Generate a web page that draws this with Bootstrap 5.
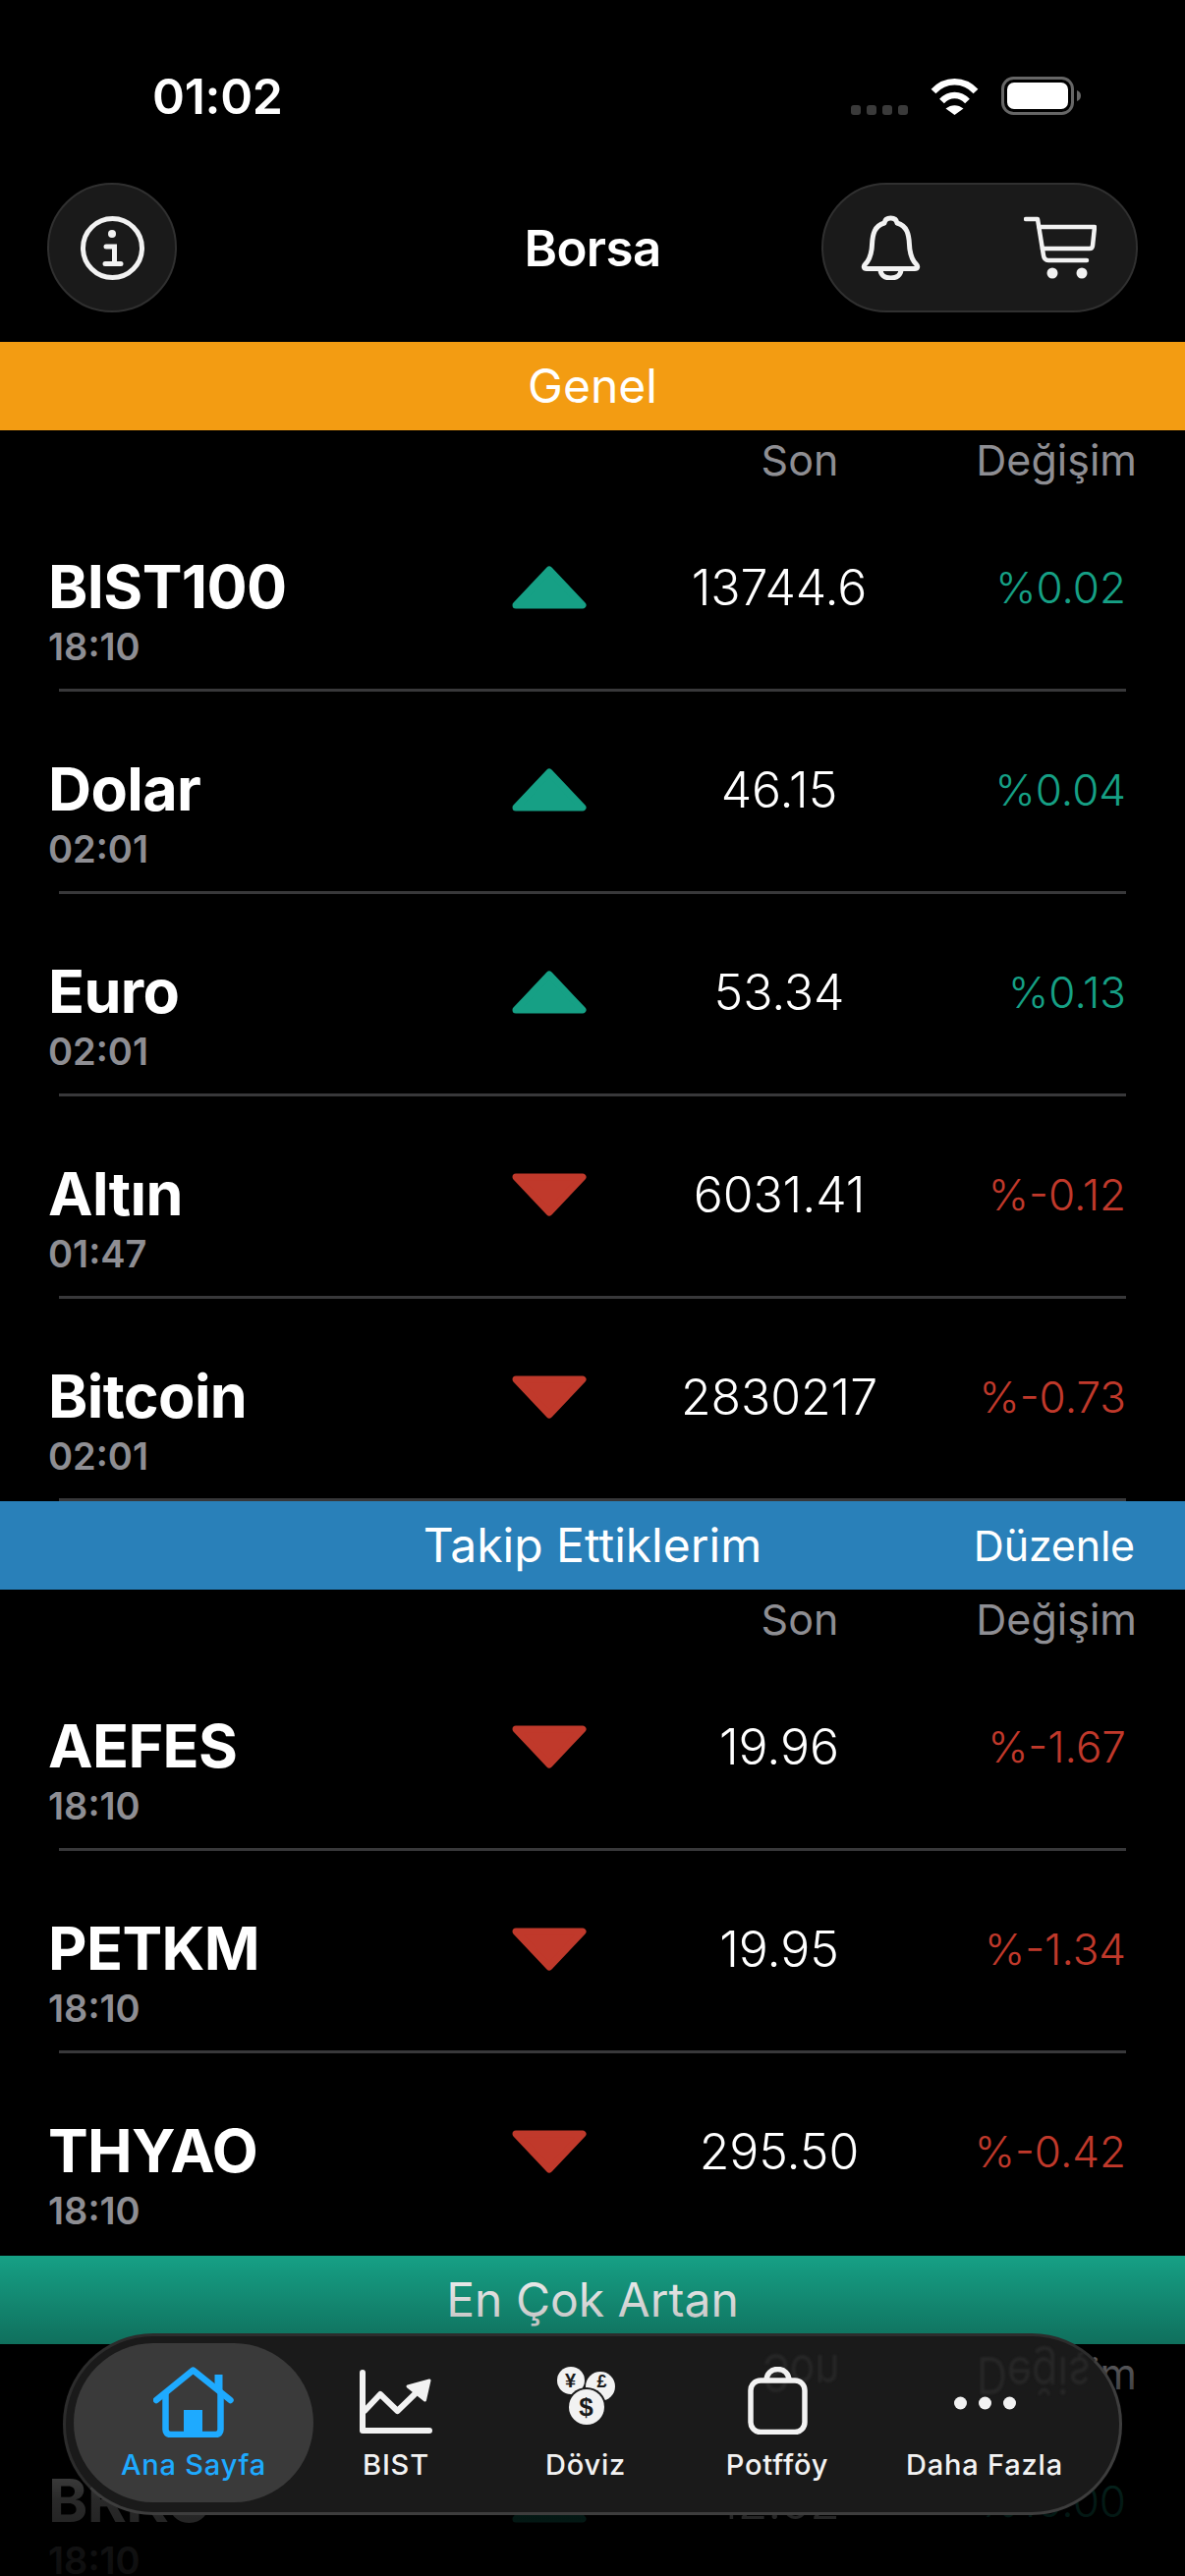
<!DOCTYPE html>
<html lang="tr">
<head>
<meta charset="utf-8">
<title>Borsa</title>
<link href="https://cdn.jsdelivr.net/npm/bootstrap@5.3.0/dist/css/bootstrap.min.css" rel="stylesheet">
<style>
html,body{height:100%;overflow:hidden;background:#000;}
body{font-family:Inter,"Liberation Sans",sans-serif;color:#fff;}
.screen{width:1206px;height:2622px;overflow:hidden;background:#000;}
.statusbar{height:186px;padding:78px 106px 0 155px;}
.clock{font-size:50px;font-weight:600;line-height:40px;letter-spacing:-.3px;}
.sysicons{gap:23px;height:39px;}
.sigdots{gap:6px;}
.sigdots span{width:10px;height:10px;border-radius:3px;background:#3a3a3a;display:block;}
.topbar{height:132px;margin:0 48px 30px;display:grid;grid-template-columns:1fr auto 1fr;align-items:center;}
.glassbtn{background:#1a1a1a;border:2px solid #303030;height:132px;}
.infobtn{width:132px;}
.actionpill{width:322px;padding:0 40px 0 38px;justify-self:end;}
.pagetitle{font-size:51px;font-weight:600;letter-spacing:-.6px;line-height:1;}
.band{height:90px;font-size:48px;line-height:1;}
.band-orange{background:#f39c12;}
.band-blue{background:#2980b9;display:grid;grid-template-columns:1fr auto 1fr;padding:0 51px;}
.band-green{background:#16a085;}
.editlink{font-size:43px;justify-self:end;letter-spacing:-.2px;}
.headrow{height:60px;padding-right:49px;font-size:43px;line-height:60px;color:#8e8e93;letter-spacing:0;}
.headrow .headson{margin-right:140px;}
.quote{height:203px;padding:0 60px 4px 49px;}
.quote-name{width:472px;flex:none;padding-top:50px;}
.sym{font-size:61px;font-weight:700;line-height:60px;letter-spacing:-.6px;}
.stamp{font-size:38px;font-weight:600;line-height:40px;color:#8e8e93;margin-top:11px;}
.quote-arrow{width:76px;flex:none;line-height:0;}
.quote-price{width:392px;flex:none;font-size:50px;font-weight:300;text-align:center;letter-spacing:-.1px;line-height:1;}
.quote-change{flex:1 1 0;font-size:44px;font-weight:300;text-align:right;line-height:1;white-space:nowrap;}
.rise{color:#16a085;}
.fall{color:#c0392b;}
.rule{height:3px;margin:0 60px;background:#38383a;}
.dimmer{left:0;right:0;bottom:0;height:326px;pointer-events:none;background:linear-gradient(to bottom,rgba(0,0,0,0) 0,rgba(0,0,0,.3) 90px,rgba(0,0,0,.52) 134px,rgba(0,0,0,.84) 249px,rgba(0,0,0,.9) 100%);}
.tabbar{left:64px;top:2375px;width:1078px;height:185px;background:#1a1a1a;border:3px solid #2c2c2c;border-bottom-color:#3d3d3d;border-right-color:#3d3d3d;border-radius:92px;padding:7px 0 0 8px;display:grid;grid-template-columns:244px 168px 218px 172px 250px;overflow:hidden;}
.tab{height:162px;border-radius:81px;color:#f2f2f2;font-size:29px;font-weight:500;line-height:34px;letter-spacing:.8px;position:relative;z-index:1;}
.tab-on{background:#3a3a3a;color:#1eaaff;}
.tab-icon{height:96px;padding-top:24px;line-height:0;}
.tab-text{white-space:nowrap;padding-top:11px;}
.ghost{color:#272727;font-size:43px;line-height:1;transform:scaleY(-1.2);filter:blur(1px);}
.ghost-a{left:709px;top:16px;}
.ghost-b{left:927px;top:18px;}
</style>
</head>
<body>
<div class="screen position-relative">

  <div class="statusbar d-flex align-items-start justify-content-between">
    <div class="clock">01:02</div>
    <div class="sysicons d-flex align-items-end">
      <div class="sigdots d-flex"><span></span><span></span><span></span><span></span></div>
      <svg width="49" height="38" viewBox="0 0 49 38" class="d-block"><path d="M3 14C15 1 34 1 46 14" fill="none" stroke="#fff" stroke-width="6.5"/><path d="M11.5 24C19 16 30 16 37.5 24" fill="none" stroke="#fff" stroke-width="6.5"/><path d="M15.5 31.5C21 27 28 27 33.500 31.500L24.500 38Z" fill="#fff"/></svg>
      <svg width="81" height="39" viewBox="0 0 81 39" class="d-block"><rect x="1.500" y="1.500" width="71" height="36" rx="11" fill="none" stroke="#666" stroke-width="3"/><rect x="6" y="6" width="62" height="27" rx="7" fill="#fff"/><path d="M77 14c3 1 4 3 4 5.500s-1 4.500-4 5.500z" fill="#666"/></svg>
    </div>
  </div>

  <div class="topbar">
    <div class="glassbtn infobtn rounded-circle d-flex align-items-center justify-content-center">
      <svg width="65" height="65" viewBox="0 0 65 65" fill="none" stroke="#f2f2f2" stroke-width="5" stroke-linecap="round"><circle cx="32.500" cy="32.500" r="30"/><circle cx="32" cy="18" r="4" fill="#f2f2f2" stroke="none"/><path d="M26 31h8.500v17M25 48.500h16"/></svg>
    </div>
    <div class="pagetitle">Borsa</div>
    <div class="glassbtn actionpill rounded-pill d-flex align-items-center justify-content-between">
      <svg width="61" height="66" viewBox="0 0 61 66" fill="none" stroke="#f2f2f2" stroke-width="5" stroke-linejoin="round"><path d="M30.500 3c-4 0-6 2-6.500 5C14 11 12 19 11.500 30c-.4 9-2 15-7 20-2 2-1.500 4.500 1.500 4.500h49c3 0 3.500-2.500 1.500-4.500-5-5-6.600-11-7-20C49 19 47 11 37 8c-.5-3-2.500-5-6.500-5z"/><path d="M20 55c0 6 4.500 9 10.500 9S41 61 41 55"/></svg>
      <svg width="74" height="64" viewBox="0 0 74 64" fill="none" stroke="#f2f2f2" stroke-width="4.500" stroke-linecap="round" stroke-linejoin="round"><path d="M2 3h12l6 37c.4 3 2 5 5 5h39"/><path d="M15.500 11H72l-2 19c-.2 2-1 3-3 3H19"/><circle cx="29" cy="58" r="5.500" fill="#f2f2f2" stroke="none"/><circle cx="59" cy="58" r="5.500" fill="#f2f2f2" stroke="none"/></svg>
    </div>
  </div>

  <div class="band band-orange d-flex align-items-center justify-content-center">Genel</div>
  <div class="headrow d-flex justify-content-end"><span class="headson">Son</span><span>Değişim</span></div>

  <div class="quote d-flex align-items-center">
    <div class="quote-name"><div class="sym">BIST100</div><div class="stamp">18:10</div></div>
    <div class="quote-arrow"><svg width="76" height="44" viewBox="0 0 76 44"><path d="M38 4L72 40H4Z" fill="#16a085" stroke="#16a085" stroke-width="7" stroke-linejoin="round"/></svg></div>
    <div class="quote-price">13744.6</div><div class="quote-change rise">%0.02</div>
  </div><div class="rule"></div>
  <div class="quote d-flex align-items-center">
    <div class="quote-name"><div class="sym">Dolar</div><div class="stamp">02:01</div></div>
    <div class="quote-arrow"><svg width="76" height="44" viewBox="0 0 76 44"><path d="M38 4L72 40H4Z" fill="#16a085" stroke="#16a085" stroke-width="7" stroke-linejoin="round"/></svg></div>
    <div class="quote-price">46.15</div><div class="quote-change rise">%0.04</div>
  </div><div class="rule"></div>
  <div class="quote d-flex align-items-center">
    <div class="quote-name"><div class="sym">Euro</div><div class="stamp">02:01</div></div>
    <div class="quote-arrow"><svg width="76" height="44" viewBox="0 0 76 44"><path d="M38 4L72 40H4Z" fill="#16a085" stroke="#16a085" stroke-width="7" stroke-linejoin="round"/></svg></div>
    <div class="quote-price">53.34</div><div class="quote-change rise">%0.13</div>
  </div><div class="rule"></div>
  <div class="quote d-flex align-items-center">
    <div class="quote-name"><div class="sym">Altın</div><div class="stamp">01:47</div></div>
    <div class="quote-arrow"><svg width="76" height="44" viewBox="0 0 76 44"><path d="M38 40L72 4H4Z" fill="#c0392b" stroke="#c0392b" stroke-width="7" stroke-linejoin="round"/></svg></div>
    <div class="quote-price">6031.41</div><div class="quote-change fall">%-0.12</div>
  </div><div class="rule"></div>
  <div class="quote d-flex align-items-center">
    <div class="quote-name"><div class="sym">Bitcoin</div><div class="stamp">02:01</div></div>
    <div class="quote-arrow"><svg width="76" height="44" viewBox="0 0 76 44"><path d="M38 40L72 4H4Z" fill="#c0392b" stroke="#c0392b" stroke-width="7" stroke-linejoin="round"/></svg></div>
    <div class="quote-price">2830217</div><div class="quote-change fall">%-0.73</div>
  </div><div class="rule"></div>

  <div class="band band-blue align-items-center"><span></span><span>Takip Ettiklerim</span><span class="editlink">Düzenle</span></div>
  <div class="headrow d-flex justify-content-end"><span class="headson">Son</span><span>Değişim</span></div>

  <div class="quote d-flex align-items-center">
    <div class="quote-name"><div class="sym">AEFES</div><div class="stamp">18:10</div></div>
    <div class="quote-arrow"><svg width="76" height="44" viewBox="0 0 76 44"><path d="M38 40L72 4H4Z" fill="#c0392b" stroke="#c0392b" stroke-width="7" stroke-linejoin="round"/></svg></div>
    <div class="quote-price">19.96</div><div class="quote-change fall">%-1.67</div>
  </div><div class="rule"></div>
  <div class="quote d-flex align-items-center">
    <div class="quote-name"><div class="sym">PETKM</div><div class="stamp">18:10</div></div>
    <div class="quote-arrow"><svg width="76" height="44" viewBox="0 0 76 44"><path d="M38 40L72 4H4Z" fill="#c0392b" stroke="#c0392b" stroke-width="7" stroke-linejoin="round"/></svg></div>
    <div class="quote-price">19.95</div><div class="quote-change fall">%-1.34</div>
  </div><div class="rule"></div>
  <div class="quote d-flex align-items-center">
    <div class="quote-name"><div class="sym">THYAO</div><div class="stamp">18:10</div></div>
    <div class="quote-arrow"><svg width="76" height="44" viewBox="0 0 76 44"><path d="M38 40L72 4H4Z" fill="#c0392b" stroke="#c0392b" stroke-width="7" stroke-linejoin="round"/></svg></div>
    <div class="quote-price">295.50</div><div class="quote-change fall">%-0.42</div>
  </div>
  <div class="rule bg-black"></div>

  <div class="band band-green d-flex align-items-center justify-content-center">En Çok Artan</div>
  <div class="headrow d-flex justify-content-end"><span class="headson">Son</span><span>Değişim</span></div>
  <div class="quote d-flex align-items-center">
    <div class="quote-name"><div class="sym">BRKO</div><div class="stamp">18:10</div></div>
    <div class="quote-arrow"><svg width="76" height="44" viewBox="0 0 76 44"><path d="M38 4L72 40H4Z" fill="#16a085" stroke="#16a085" stroke-width="7" stroke-linejoin="round"/></svg></div>
    <div class="quote-price">12.52</div><div class="quote-change rise">%10.00</div>
  </div>

  <div class="dimmer position-absolute"></div>

  <nav class="tabbar position-absolute">
    <span class="ghost ghost-a position-absolute" aria-hidden="true">Son</span>
    <span class="ghost ghost-b position-absolute" aria-hidden="true">Değiş</span>
    <div class="tab tab-on text-center">
      <div class="tab-icon"><svg width="82" height="72" viewBox="0 0 82 72" fill="none" stroke="#1eaaff" stroke-width="6.500" stroke-linecap="round" stroke-linejoin="round"><path d="M3 34L40.500 3.500 78.500 34"/><path d="M66.500 8v16" stroke-linecap="butt" stroke-width="8"/><path d="M12.500 28v36c0 3 2 5 5 5h46c3 0 5-2 5-5V28"/><rect x="31" y="44" width="19" height="26" fill="#1eaaff" stroke="none"/></svg></div>
      <div class="tab-text">Ana Sayfa</div>
    </div>
    <div class="tab text-center">
      <div class="tab-icon"><svg width="74" height="72" viewBox="0 0 74 64" fill="none" stroke="#f2f2f2" stroke-width="6" stroke-linecap="round" stroke-linejoin="round"><path d="M3 2v59h68"/><path d="M5 41L21 24 38.500 41 56 24"/><path d="M49 16L71 10 66.500 30Z" fill="#f2f2f2" stroke-width="3"/></svg></div>
      <div class="tab-text">BIST</div>
    </div>
    <div class="tab text-center">
      <div class="tab-icon"><svg width="59" height="59" viewBox="0 0 59 59"><circle cx="14" cy="14" r="14" fill="#f2f2f2"/><circle cx="44" cy="20" r="15" fill="#f2f2f2"/><circle cx="30" cy="41" r="20" fill="#1a1a1a"/><circle cx="30" cy="41" r="18" fill="#f2f2f2"/><text x="14" y="21" text-anchor="middle" font-family="Liberation Sans" font-weight="700" font-size="20" fill="#1a1a1a">¥</text><text x="46" y="21" text-anchor="middle" font-family="Liberation Sans" font-weight="700" font-size="18" fill="#1a1a1a">£</text><text x="30" y="50" text-anchor="middle" font-family="Liberation Sans" font-weight="700" font-size="26" fill="#1a1a1a">$</text></svg></div>
      <div class="tab-text">Döviz</div>
    </div>
    <div class="tab text-center">
      <div class="tab-icon"><svg width="61" height="69" viewBox="0 0 61 69" fill="none" stroke="#f2f2f2" stroke-width="5.500"><rect x="3" y="14" width="55" height="52.500" rx="10"/><path d="M19 14c0-7 5-11.500 11.500-11.500S42 7 42 14"/></svg></div>
      <div class="tab-text">Potfföy</div>
    </div>
    <div class="tab text-center">
      <div class="tab-icon"><svg width="63" height="60" viewBox="0 0 63 60" fill="#f2f2f2"><circle cx="6.500" cy="37" r="6.500"/><circle cx="31.500" cy="37" r="6.500"/><circle cx="56.500" cy="37" r="6.500"/></svg></div>
      <div class="tab-text">Daha Fazla</div>
    </div>
  </nav>
</div>
<script src="https://cdn.jsdelivr.net/npm/bootstrap@5.3.0/dist/js/bootstrap.bundle.min.js"></script>
</body>
</html>
